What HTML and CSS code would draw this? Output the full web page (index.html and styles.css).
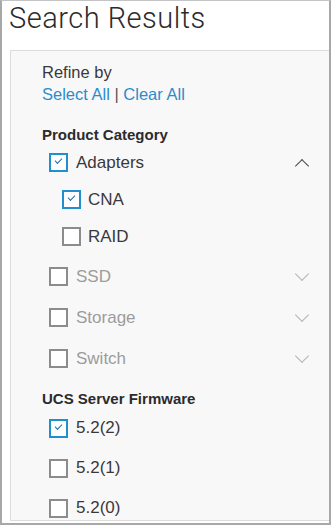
FILE: index.html
```html
<!DOCTYPE html>
<html>
<head>
  <title>Search Results</title>
  <link rel="stylesheet" href="styles.css">
</head>
<body>

  <div class="frame">
    <div class="page-head">
      <h1>Search Results</h1>
    </div>

    <div class="filters">
      <div class="refine">Refine by</div>
      <div class="links">
        <a href="#">Select All</a> <span class="sep">|</span> <a href="#">Clear All</a>
      </div>

      <h2 class="group-title">Product Category</h2>

      <div class="option sub-row">
        <span class="box checked"></span>
        <span class="label">Adapters</span>
        <span class="chevron up"></span>
      </div>
      <div class="option sub-row child">
        <span class="box checked"></span>
        <span class="label">CNA</span>
      </div>
      <div class="option sub-row child">
        <span class="box"></span>
        <span class="label">RAID</span>
      </div>

      <div class="option disabled first-top">
        <span class="box"></span>
        <span class="label">SSD</span>
        <span class="chevron down"></span>
      </div>
      <div class="option disabled">
        <span class="box"></span>
        <span class="label">Storage</span>
        <span class="chevron down"></span>
      </div>
      <div class="option disabled">
        <span class="box"></span>
        <span class="label">Switch</span>
        <span class="chevron down"></span>
      </div>

      <h2 class="group-title fw-title">UCS Server Firmware</h2>

      <div class="option fw">
        <span class="box checked"></span>
        <span class="label">5.2(2)</span>
      </div>
      <div class="option fw">
        <span class="box"></span>
        <span class="label">5.2(1)</span>
      </div>
      <div class="option fw">
        <span class="box"></span>
        <span class="label">5.2(0)</span>
      </div>
    </div>
  </div>

</body>
</html>
```

FILE: styles.css
```css
body {
  margin: 0;
  padding: 0;
  font-family: "Liberation Sans", Arial, sans-serif;
  color: #39393b;
  background-color: #fff;
}

.frame {
  box-sizing: border-box;
  width: 331px;
  height: 525px;
  border: 2px solid #a8a8a8;
  border-top: 1px solid #c4c4c4;
  overflow: hidden;
  background-color: #fff;
}

.page-head {
  height: 49px;
  padding-left: 7px;
}

.page-head h1 {
  margin: 0;
  font-family: Roboto, "Liberation Sans", sans-serif;
  font-weight: 300;
  font-size: 29px;
  line-height: normal;
  letter-spacing: 0.5px;
  color: #2b2b2d;
}

.filters {
  box-sizing: border-box;
  margin-left: 8px;
  height: 471px;
  padding-top: 10px;
  padding-left: 31px;
  background-color: #f9f8f8;
  border: 1px solid #dcdcdc;
  border-right: none;
  overflow: hidden;
}

.refine {
  font-size: 16.5px;
  line-height: 22px;
  color: #39393b;
}

.links {
  font-size: 16.5px;
  line-height: 22px;
  color: #555;
}

.links a {
  color: #2a8dcb;
  text-decoration: none;
}

.group-title {
  margin: 21px 0 0;
  font-size: 15px;
  font-weight: bold;
  line-height: 18px;
  color: #2b2b2d;
}

.fw-title {
  margin-top: 11px;
}

.option {
  display: flex;
  align-items: center;
  height: 41px;
  padding-left: 7px;
  padding-right: 20px;
  font-size: 17px;
}

.sub-row {
  height: 37px;
}

.child {
  padding-left: 20px;
}

.first-top {
  margin-top: 1px;
}

.fw {
  height: 40px;
}

.box {
  box-sizing: border-box;
  position: relative;
  width: 19px;
  height: 19px;
  border: 2px solid #8c8c8c;
  background-color: #fff;
  flex-shrink: 0;
}

.box.checked {
  border-color: #1f8fd0;
}

/* small tick inside a checked box */
.box.checked::after {
  content: "";
  position: absolute;
  left: 4px;
  top: 3px;
  width: 6px;
  height: 3px;
  border-left: 1.5px solid #1c6ea4;
  border-bottom: 1.5px solid #1c6ea4;
  transform: rotate(-45deg);
}

.label {
  margin-left: 8px;
  flex: 1;
  line-height: 20px;
}

.child .label {
  margin-left: 7px;
}

.disabled .label {
  color: #9c9c9c;
}

.chevron {
  width: 9px;
  height: 9px;
  border-left: 1.3px solid #4a4a4a;
  border-top: 1.3px solid #4a4a4a;
  margin-right: 2px;
}

.chevron.up {
  transform: rotate(45deg);
  margin-top: 6px;
}

.chevron.down {
  border-color: #b4b4b4;
  transform: rotate(-135deg);
  margin-top: -6px;
}
```
